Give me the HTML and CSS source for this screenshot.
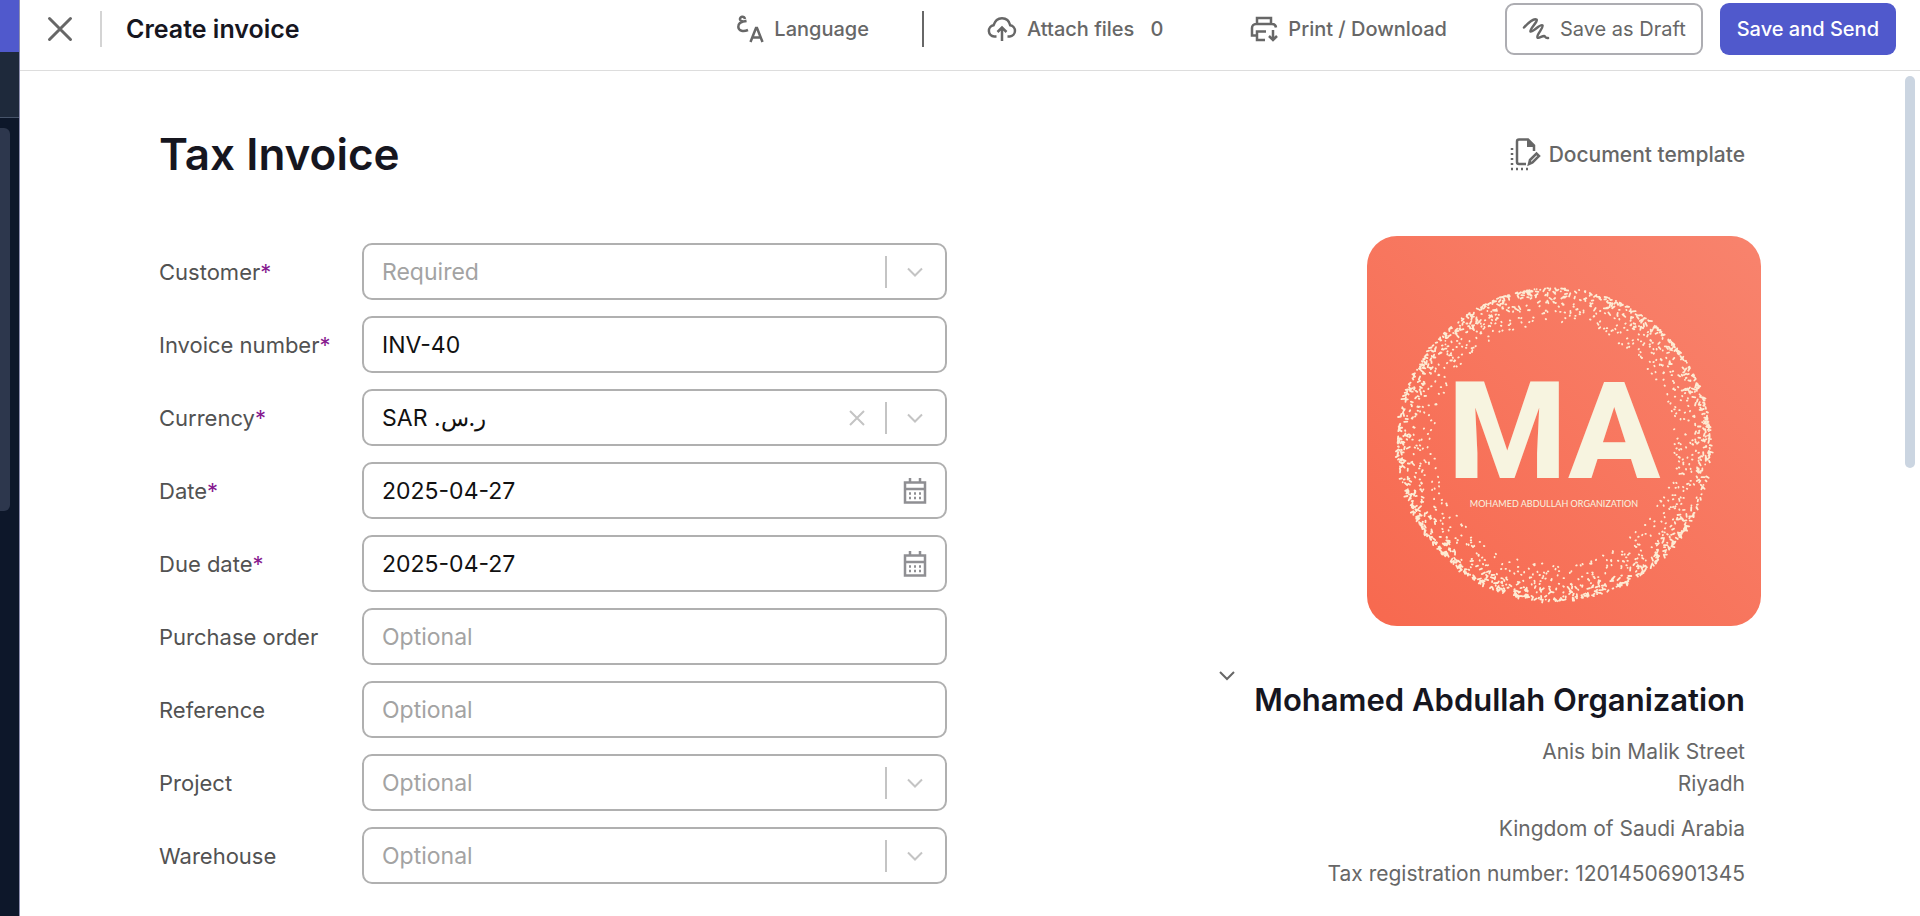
FILE: index.html
```html
<!DOCTYPE html>
<html lang="en">
<head>
<meta charset="utf-8">
<meta name="viewport" content="width=device-width, initial-scale=1">
<title>Create invoice</title>
<link rel="stylesheet" href="styles.css">
</head>
<body>
<div class="app">
	<aside class="sidebar">
		<div class="side-brand"></div>
		<div class="side-org"></div>
		<div class="side-menu"><div class="side-thumb"></div></div>
	</aside>

	<div class="page">
		<header class="topbar">
			<button class="close" aria-label="Close">
				<svg width="26" height="26" viewBox="0 0 26 26"><path d="M2.500 2.500l21 21M23.500 2.500l-21 21"/></svg>
			</button>
			<h1 class="topbar-title">Create invoice</h1>

			<div class="actions">
				<button class="action language">
					<svg width="28" height="30" viewBox="0 0 28 30">
						<path d="M9 5C8 1.500 3.500 2.500 4 5.500c.4 2 3 2.300 6.500 1.600C6 7.600 2 9.500 2.300 13c.3 4 5 5 9.700 3"/>
						<path d="M14.500 28l5.500-14h1l5.500 14M16.500 23.500h8"/>
					</svg>
					<span>Language</span>
				</button>
				<button class="action attach">
					<svg width="30" height="26" viewBox="0 0 30 26">
						<path d="M9.500 20.500H7.200a5.700 5.700 0 0 1-.6-11.300C8 4.500 11 2.200 15 2.200s7.200 2.600 8.200 7a5.700 5.700 0 0 1-.4 11.300h-2.300"/>
						<path d="M15 25V12M10.500 16l4.500-4.500 4.500 4.500"/>
					</svg>
					<span>Attach files</span>
					<span class="count">0</span>
				</button>
				<button class="action print">
					<svg width="28" height="26" viewBox="0 0 28 26">
						<path d="M7 8V2h14v6M15 24H7v-8.500h9M7 19.500H2V12a4 4 0 0 1 4-4h16a4 4 0 0 1 4 3.500"/>
						<path d="M23 14v10M19 20l4 4 4-4"/>
					</svg>
					<span>Print / Download</span>
				</button>
				<div class="save">
					<button class="btn btn-draft">
						<svg width="28" height="24" viewBox="0 0 28 24"><path d="M2 10.500C6 6 12 1 14.500 2.500c2 1.500-7.500 10-6 12C10 16 18.500 6.500 20.500 8.500c1.500 2-6.500 9.500-5 12 1 1.500 4.500-1.500 6.500-1.500 1.500 0 1 2.500 4 2"/></svg>
						<span>Save as Draft</span>
					</button>
					<button class="btn btn-send">Save and Send</button>
				</div>
			</div>
		</header>

		<main class="content">
			<div class="invoice">
				<div class="invoice-head">
					<h2 class="invoice-title">Tax Invoice</h2>
					<button class="template">
						<svg width="32" height="34" viewBox="0 0 32 34">
							<path d="M17 27H10a2 2 0 0 1-2-2V4.500a2 2 0 0 1 2-2h9l6 6V14"/>
							<path class="fill" d="M18 2l8 8h-8z"/>
							<path d="M20 27l1-4 6.500-6.500 2.500 2.500-6.500 6.500z"/>
							<path class="dots" d="M3 11v19M2 32h17"/>
						</svg>
						<span>Document template</span>
					</button>
				</div>

				<div class="columns">
					<form class="fields">
						<label for="customer">Customer<b>*</b></label>
						<div class="control">
							<select id="customer" class="empty"><option>Required</option></select>
							<span class="drop"><svg width="18" height="10" viewBox="0 0 18 10"><path d="M2 1.500l7 7 7-7"/></svg></span>
						</div>

						<label for="number">Invoice number<b>*</b></label>
						<div class="control"><input id="number" type="text" value="INV-40"></div>

						<label for="currency">Currency<b>*</b></label>
						<div class="control">
							<select id="currency"><option>SAR .ر.س</option></select>
							<button type="button" class="clear" aria-label="Clear currency"><svg width="18" height="18" viewBox="0 0 18 18"><path d="M2 2l14 14M16 2L2 16"/></svg></button>
							<span class="drop"><svg width="18" height="10" viewBox="0 0 18 10"><path d="M2 1.500l7 7 7-7"/></svg></span>
						</div>

						<label for="date">Date<b>*</b></label>
						<div class="control">
							<input id="date" type="text" value="2025-04-27">
							<button type="button" class="calendar" aria-label="Pick date"><svg width="24" height="28" viewBox="0 0 24 28"><path d="M2 5.500h20v20H2zM2 12h20M7 1v4M17 1v4"/><path class="dots" d="M6 16.500h12M6 21h12"/></svg></button>
						</div>

						<label for="due">Due date<b>*</b></label>
						<div class="control">
							<input id="due" type="text" value="2025-04-27">
							<button type="button" class="calendar" aria-label="Pick due date"><svg width="24" height="28" viewBox="0 0 24 28"><path d="M2 5.500h20v20H2zM2 12h20M7 1v4M17 1v4"/><path class="dots" d="M6 16.500h12M6 21h12"/></svg></button>
						</div>

						<label for="order">Purchase order</label>
						<div class="control"><input id="order" type="text" placeholder="Optional"></div>

						<label for="reference">Reference</label>
						<div class="control"><input id="reference" type="text" placeholder="Optional"></div>

						<label for="project">Project</label>
						<div class="control">
							<select id="project" class="empty"><option>Optional</option></select>
							<span class="drop"><svg width="18" height="10" viewBox="0 0 18 10"><path d="M2 1.500l7 7 7-7"/></svg></span>
						</div>

						<label for="warehouse">Warehouse</label>
						<div class="control">
							<select id="warehouse" class="empty"><option>Optional</option></select>
							<span class="drop"><svg width="18" height="10" viewBox="0 0 18 10"><path d="M2 1.500l7 7 7-7"/></svg></span>
						</div>
					</form>

					<section class="company">
						<svg class="logo" viewBox="0 0 394 390" role="img" aria-label="MA logo">
							<defs>
								<linearGradient id="coral" x1="0" y1="1" x2="1" y2="0">
									<stop offset="0" stop-color="#f7694f"/>
									<stop offset="1" stop-color="#f8836d"/>
								</linearGradient>
							</defs>
							<rect width="394" height="390" rx="30" fill="url(#coral)"/>
							<g id="ring"></g>
							<text class="logo-big" x="187" y="242">MA</text>
							<text class="logo-small" x="187" y="271">MOHAMED ABDULLAH ORGANIZATION</text>
						</svg>
						<div class="org">
							<button class="collapse" aria-label="Collapse company details"><svg width="18" height="12" viewBox="0 0 18 12"><path d="M2 2l7 7 7-7"/></svg></button>
							<div class="org-text">
								<h3>Mohamed Abdullah Organization</h3>
								<p>Anis bin Malik Street<br>Riyadh</p>
								<p>Kingdom of Saudi Arabia</p>
								<p>Tax registration number: 12014506901345</p>
							</div>
						</div>
					</section>
				</div>
			</div>
			<div class="scrollbar"><div class="scroll-thumb"></div></div>
		</main>
	</div>
</div>
<script src="ring.js"></script>
</body>
</html>
```
FILE: styles.css
```css
* {
  box-sizing: border-box;
}

body {
  margin: 0;
  background: #fff;
  color: #676767;
  font-family: Inter, "Noto Sans", sans-serif;
  font-size: 21px;
}

button {
  padding: 0;
  border: 0;
  background: none;
  color: inherit;
  font: inherit;
  cursor: pointer;
}

svg {
  flex-shrink: 0;
  fill: none;
  stroke: currentColor;
  stroke-width: 2;
}

h1, h2, h3, p {
  margin: 0;
}

.app {
  display: flex;
  height: 100vh;
  overflow: hidden;
}

/* strip of the navigation behind the page */
.sidebar {
  display: flex;
  flex-direction: column;
  width: 20px;
  background: #0d172a;
  border-right: 1px solid #8e8fb0;
}

.side-brand {
  height: 52px;
  background: #5059cc;
}

.side-org {
  height: 66px;
  background: #1e293b;
  border-bottom: 1px solid #47546a;
}

.side-menu {
  flex: 1;
  padding-top: 10px;
}

.side-thumb {
  width: 10px;
  height: 383px;
  border-radius: 0 6px 6px 0;
  background: #2d374d;
}

.page {
  display: flex;
  flex: 1;
  flex-direction: column;
  min-width: 0;
}

/* top bar */
.topbar {
  display: flex;
  align-items: center;
  padding: 0 24px 12px 27px;
  height: 71px;
  border-bottom: 1px solid #ddd;
}

.topbar svg {
  stroke-width: 2.5;
}

.close {
  display: flex;
  align-items: center;
  height: 36px;
  padding-right: 27px;
  border-right: 2px solid #d4d4d4;
}

.topbar .close svg {
  stroke-width: 3;
  stroke-linecap: round;
}

.topbar-title {
  margin-left: 24px;
  color: #16161f;
  font-size: 25px;
  font-weight: 600;
}

.actions {
  display: flex;
  align-items: center;
  margin-left: auto;
  font-size: 20px;
  font-weight: 500;
}

.action {
  display: flex;
  align-items: center;
  gap: 10px;
}

.language {
  height: 36px;
  padding-right: 53px;
  border-right: 2px solid #676767;
}

.attach {
  margin-left: 63px;
}

.count {
  margin-left: 6px;
}

.print {
  margin: 0 58px 0 87px;
}

.save {
  display: flex;
  gap: 17px;
}

.btn {
  display: flex;
  align-items: center;
  gap: 10px;
  height: 52px;
  padding: 0 17px;
  border-radius: 9px;
}

.btn-draft {
  padding: 0 15px;
  border: 2px solid #adadb2;
}

.btn-draft span {
  font-weight: 400;
}

.btn-draft svg {
  stroke-linecap: round;
}

.btn-send {
  background: #5059cc;
  color: #fff;
}

/* invoice */
.content {
  display: flex;
  flex: 1;
  min-height: 0;
}

.invoice {
  flex: 1;
  padding: 54px 144px 24px 139px;
}

.invoice-head {
  display: flex;
  align-items: center;
  justify-content: space-between;
  height: 58px;
  padding-right: 16px;
}

.invoice-title {
  color: #16161f;
  font-size: 44px;
  font-weight: 600;
}

.template {
  display: flex;
  align-items: center;
  gap: 8px;
  font-weight: 500;
}

.template svg {
  stroke-width: 2.5;
}

.template .fill {
  fill: currentColor;
  stroke: none;
}

.dots {
  stroke-dasharray: 2 3;
}

.columns {
  display: grid;
  grid-template-columns: 1fr 1fr;
  gap: 26px;
  margin-top: 53px;
}

.fields {
  display: grid;
  grid-template-columns: 203px 1fr;
  align-items: center;
  align-content: start;
  gap: 16px 0;
  padding-top: 7px;
}

.fields label {
  color: #525252;
  font-size: 22px;
}

.fields b {
  color: #86198f;
  font-weight: 400;
}

.control {
  display: flex;
  align-items: center;
  height: 57px;
  padding: 0 18px;
  border: 2px solid #b0b0b0;
  border-radius: 10px;
}

.control input,
.control select {
  flex: 1;
  min-width: 0;
  padding: 0;
  border: 0;
  outline: 0;
  background: none;
  color: #111;
  font: inherit;
  font-size: 23px;
  appearance: none;
}

.control input::placeholder,
.control .empty {
  color: #a3a3a3;
  opacity: 1;
}

.drop, .clear {
  display: flex;
  align-items: center;
  color: #c4c4c4;
}

.drop {
  height: 32px;
  padding: 0 3px 0 19px;
  border-left: 2px solid #c4c4c4;
}

.clear {
  margin-right: 19px;
}

.calendar {
  display: flex;
  color: #8f8f93;
}

.calendar svg {
  stroke-width: 2.5;
}

.company {
  display: flex;
  flex-direction: column;
  align-items: flex-end;
}

.logo {
  width: 50%;
  stroke: none;
}

.logo text {
  fill: #f7f4e0;
  text-anchor: middle;
}

.logo-big {
  font: 800 136px Roboto, sans-serif;
}

.logo-small {
  font: 9px Lato, sans-serif;
}

.org {
  display: flex;
  gap: 18px;
  margin-top: 44px;
  padding-right: 16px;
}

.collapse {
  display: flex;
  align-self: flex-start;
}

.org-text {
  padding-top: 11px;
  text-align: right;
}

.org h3 {
  margin-bottom: 17px;
  color: #16161f;
  font-size: 31px;
  font-weight: 600;
  line-height: 38px;
}

.org p {
  margin-bottom: 13px;
  line-height: 32px;
}

.scrollbar {
  width: 15px;
  padding-top: 5px;
}

.scroll-thumb {
  width: 10px;
  height: 392px;
  border-radius: 5px;
  background: #cbd5e1;
}
```
FILE: ring.js
```js
// speckled ring of the logo: short strokes, dense at the rim and thin inside
let seed = 7;
function rnd() {
	seed = (seed * 16807) % 2147483647;
	return seed / 2147483647;
}
let out = "";
for (let i = 0; i < 1600; i++) {
	const a = rnd() * Math.PI * 2;
	const r = 156 - Math.pow(rnd(), 2.4) * 36;
	const x = 187 + r * Math.cos(a);
	const y = 208 + r * Math.sin(a);
	const t = rnd() * Math.PI;
	const l = r > 142 ? rnd() * 3.5 : 0.5;
	out += "M" + x.toFixed(1) + " " + y.toFixed(1) + "l" + (l * Math.cos(t)).toFixed(1) + " " + (l * Math.sin(t)).toFixed(1);
}
document.getElementById("ring").innerHTML = '<path stroke="#fdebd3" stroke-width="1.800" stroke-linecap="round" d="' + out + '"/>';
```
